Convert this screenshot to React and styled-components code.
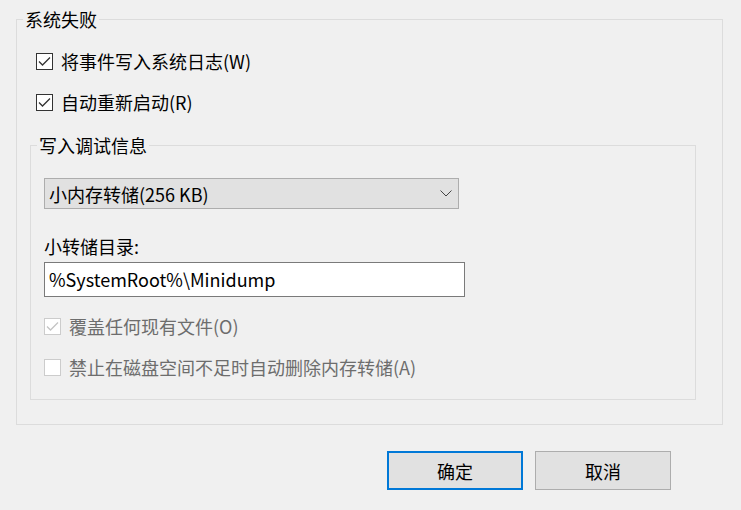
import React from 'react'
import styled, { createGlobalStyle } from 'styled-components'

const GlobalStyle = createGlobalStyle`
  html, body {
    margin: 0;
    padding: 0;
    background: #f0f0f0;
  }
  body {
    font-family: "Noto Sans CJK SC", "Noto Sans", sans-serif;
    font-size: 18px;
    line-height: 22px;
    color: #000;
  }
`

const Dialog = styled.div`
  width: 741px;
  height: 510px;
  box-sizing: border-box;
  padding-top: 8px;
  background: #f0f0f0;
  display: flex;
  flex-direction: column;
  overflow: hidden;
`

const Group = styled.fieldset`
  margin: 0;
  padding: 0;
  border: 1px solid #dcdcdc;
  min-width: 0;
  display: flex;
  flex-direction: column;
`

const OuterGroup = styled(Group)`
  margin: 0 18px 0 16px;
  padding: 20px 0 24px 19px;
  gap: 19px;
`

const InnerGroup = styled(Group)`
  margin: 2px 26px 0 -6px;
  padding: 22px 0 21px 13px;
`

const Legend = styled.legend`
  margin-left: ${p => p.$shift}px;
  padding: 0 2px;
  line-height: 22px;
`

const CheckRow = styled.label`
  display: flex;
  align-items: center;
  height: 22px;
  gap: 8px;
  color: ${p => (p.$disabled ? '#6d6d6d' : '#000')};
`

const Box = styled.span`
  width: 17px;
  height: 17px;
  box-sizing: border-box;
  border: 1px solid ${p => (p.$disabled ? '#cccccc' : '#333333')};
  background: #fff;
  display: flex;
  align-items: center;
  justify-content: center;
  flex: none;
`

const Select = styled.div`
  width: 415px;
  height: 31px;
  box-sizing: border-box;
  border: 1px solid #adadad;
  background: #e1e1e1;
  display: flex;
  align-items: center;
  justify-content: space-between;
  padding: 0 6px 0 4px;
`

const FieldLabel = styled.div`
  margin-top: 26px;
  height: 22px;
`

const TextBox = styled.div`
  margin-top: 5px;
  width: 421px;
  height: 35px;
  box-sizing: border-box;
  border: 1px solid #7a7a7a;
  background: #fff;
  display: flex;
  align-items: center;
  padding: 0 4px 2px;
`

const Options = styled.div`
  margin-top: 18px;
  display: flex;
  flex-direction: column;
  gap: 19px;
`

const Buttons = styled.div`
  display: flex;
  justify-content: flex-end;
  gap: 12px;
  padding: 26px 70px 0 0;
`

const Button = styled.button`
  width: 136px;
  height: 39px;
  box-sizing: border-box;
  margin: 0;
  font: inherit;
  color: #000;
  background: #e1e1e1;
  border: ${p => (p.$primary ? '2px solid #0078d7' : '1px solid #adadad')};
  padding: 0;
`

function Check({ checked, disabled }) {
  return (
    <Box $disabled={disabled}>
      {checked && (
        <svg width="13" height="11" viewBox="0 0 13 11">
          <path
            d="M1 5.5 L4.5 9 L12 1.5"
            fill="none"
            stroke={disabled ? '#c4c4c4' : '#333'}
            strokeWidth="1.3"
          />
        </svg>
      )}
    </Box>
  )
}

function Option({ checked, disabled, children }) {
  return (
    <CheckRow $disabled={disabled}>
      <Check checked={checked} disabled={disabled} />
      <span>{children}</span>
    </CheckRow>
  )
}

export default function App() {
  return (
    <Dialog>
      <GlobalStyle />
      <OuterGroup>
        <Legend $shift={-13}>系统失败</Legend>
        <Option checked>将事件写入系统日志(W)</Option>
        <Option checked>自动重新启动(R)</Option>
        <InnerGroup>
          <Legend $shift={-7}>写入调试信息</Legend>
          <Select>
            <span>小内存转储(256 KB)</span>
            <svg width="12" height="7" viewBox="0 0 12 7">
              <path d="M0.5 0.5 L6 6 L11.5 0.5" fill="none" stroke="#444" strokeWidth="1" />
            </svg>
          </Select>
          <FieldLabel>小转储目录:</FieldLabel>
          <TextBox>%SystemRoot%\Minidump</TextBox>
          <Options>
            <Option checked disabled>覆盖任何现有文件(O)</Option>
            <Option disabled>禁止在磁盘空间不足时自动删除内存转储(A)</Option>
          </Options>
        </InnerGroup>
      </OuterGroup>
      <Buttons>
        <Button $primary>确定</Button>
        <Button>取消</Button>
      </Buttons>
    </Dialog>
  )
}
